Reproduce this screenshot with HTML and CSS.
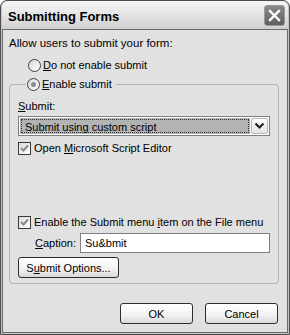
FILE: index.html
```html
<!DOCTYPE html>
<html lang="en">

<head>
    <meta charset="UTF-8">
    <title>Submitting Forms</title>
    <link rel="stylesheet" href="styles.css">
</head>

<body>
    <div class="window">
        <div class="titlebar">
            <span class="title">Submitting Forms</span>
            <span class="close-btn">
                <svg width="21" height="21" viewBox="0 0 21 21">
                    <path d="M6 6 L15 15 M15 6 L6 15" stroke="#fff" stroke-width="2.4" stroke-linecap="square" fill="none"/>
                </svg>
            </span>
        </div>
        <div class="content">
            <div class="intro">Allow users to submit your form:</div>
            <div class="option-row">
                <span class="radio"></span>
                <span><u>D</u>o not enable submit</span>
            </div>
            <fieldset class="group">
                <legend class="option-row legend-row">
                    <span class="radio checked"></span>
                    <span><u>E</u>nable submit</span>
                </legend>
                <div class="field-label"><u>S</u>ubmit:</div>
                <div class="select">
                    <span class="select-value"><span class="focus-box">Submit using custom script</span></span>
                    <span class="select-arrow">
                        <svg width="11" height="8" viewBox="0 0 11 8">
                            <path d="M1.5 1.5 L5.5 5.5 L9.5 1.5" stroke="#222" stroke-width="2.2" fill="none"/>
                        </svg>
                    </span>
                </div>
                <div class="check-row">
                    <span class="checkbox">
                        <svg width="11" height="11" viewBox="0 0 11 11">
                            <path d="M2 5 L4.5 7.5 L9 2.5" stroke="#8a8a8a" stroke-width="2" fill="none"/>
                        </svg>
                    </span>
                    <span>Open <u>M</u>icrosoft Script Editor</span>
                </div>
                <div class="spacer"></div>
                <div class="check-row">
                    <span class="checkbox">
                        <svg width="11" height="11" viewBox="0 0 11 11">
                            <path d="M2 5 L4.5 7.5 L9 2.5" stroke="#8a8a8a" stroke-width="2" fill="none"/>
                        </svg>
                    </span>
                    <span class="nowrap">Enable the Submit menu <u>i</u>tem on the File menu</span>
                </div>
                <div class="caption-row">
                    <span class="caption-label"><u>C</u>aption:</span>
                    <span class="textbox">Su&amp;bmit</span>
                </div>
                <button class="btn options-btn">S<u>u</u>bmit Options...</button>
            </fieldset>
            <div class="actions">
                <button class="btn">OK</button>
                <button class="btn">Cancel</button>
            </div>
        </div>
    </div>
</body>

</html>
```

FILE: styles.css
```css
html, body {
    margin: 0;
    padding: 0;
    background: #ffffff;
}

body {
    font-family: "Liberation Sans", Arial, sans-serif;
    font-size: 11px;
    color: #000;
}

.nowrap {
    white-space: nowrap;
}

.window {
    width: 290px;
    height: 335px;
    box-sizing: border-box;
    border: 1px solid #4c4c4c;
    border-radius: 7px 7px 0 0;
    padding: 0 1px 1px 1px;
    background: #c4c4c4;
    display: flex;
    flex-direction: column;
    overflow: hidden;
}

.titlebar {
    height: 28px;
    flex: none;
    display: flex;
    align-items: center;
    justify-content: space-between;
    padding: 0 3px 0 6px;
    background: linear-gradient(to bottom, #f6f6f6 0%, #e6e6e6 45%, #cfcfcf 100%);
    border-radius: 6px 6px 0 0;
}

.title {
    font-size: 13px;
    font-weight: 700;
    color: #000;
    padding-top: 2px;
}

.close-btn {
    width: 21px;
    height: 21px;
    box-sizing: border-box;
    border: 1px solid #9a9a9a;
    border-radius: 3px;
    background: linear-gradient(to bottom, #8a8a8a, #5e5e5e);
    display: flex;
    align-items: center;
    justify-content: center;
    margin-top: 1px;
}

.close-btn svg {
    margin: -1px;
}

.content {
    flex: 1;
    border: 1px solid #6a6a6a;
    background: #e1e1e1;
    padding: 6px 8px 0 6px;
    display: flex;
    flex-direction: column;
}

.intro {
    line-height: 15px;
    margin-bottom: 5px;
    font-size: 11.5px;
}

.option-row {
    display: flex;
    align-items: center;
    gap: 2px;
    height: 18px;
    padding-left: 19px;
}

.radio {
    width: 13px;
    height: 13px;
    box-sizing: border-box;
    border: 1px solid #3c3c3c;
    border-radius: 50%;
    background: linear-gradient(135deg, #d8d8d8, #ffffff);
    display: flex;
    align-items: center;
    justify-content: center;
}

.radio.checked::after {
    content: "";
    width: 5px;
    height: 5px;
    border-radius: 50%;
    background: #8c8c8c;
}

.group {
    margin: 1px 0 0 0;
    padding: 2px 8px 5px 8px;
    border: 1px solid #b4b4b4;
    border-radius: 4px;
    display: flex;
    flex-direction: column;
}

.legend-row {
    padding: 0 4px 0 1px;
    margin-left: 8px;
}

.field-label {
    line-height: 15px;
    margin-top: 4px;
}

.select {
    height: 20px;
    box-sizing: border-box;
    margin-top: 2px;
    border: 1px solid #7f7f7f;
    background: #ffffff;
    display: flex;
    padding: 1px;
}

.select-value {
    flex: 1;
    background: #b3b3b3;
    padding: 1px;
    display: flex;
}

.focus-box {
    flex: 1;
    border: 1px dotted #333;
    line-height: 14px;
    padding-left: 3px;
}

.select-arrow {
    width: 17px;
    box-sizing: border-box;
    margin-left: 1px;
    border: 1px solid #b8b8b8;
    border-radius: 2px;
    background: linear-gradient(to bottom, #ffffff, #e4e4e4);
    display: flex;
    align-items: center;
    justify-content: center;
}

.check-row {
    display: flex;
    align-items: center;
    gap: 3px;
    height: 16px;
    margin-top: 4px;
}

.checkbox {
    width: 13px;
    height: 13px;
    box-sizing: border-box;
    border: 1px solid #3a3a3a;
    background: linear-gradient(135deg, #dcdcdc, #ffffff);
    display: flex;
    align-items: center;
    justify-content: center;
}

.spacer {
    height: 54px;
}

.caption-row {
    display: flex;
    align-items: center;
    margin-top: 3px;
    height: 20px;
}

.caption-label {
    width: 45px;
    padding-left: 17px;
}

.textbox {
    flex: 1;
    height: 20px;
    box-sizing: border-box;
    border: 1px solid #7f7f7f;
    background: #ffffff;
    padding: 2px 4px;
    line-height: 14px;
}

.btn {
    font-family: "Liberation Sans", Arial, sans-serif;
    font-size: 11px;
    color: #000;
    height: 21px;
    border: 1px solid #2e2e2e;
    border-radius: 3px;
    background: linear-gradient(to bottom, #ffffff 0%, #f2f2f2 60%, #d8d8d8 100%);
    padding: 0;
}

.options-btn {
    width: 101px;
    margin-top: 4px;
    align-self: flex-start;
}

.actions {
    display: flex;
    justify-content: flex-end;
    gap: 12px;
    margin-top: 19px;
    padding-right: 1px;
}

.actions .btn {
    width: 73px;
}
```
